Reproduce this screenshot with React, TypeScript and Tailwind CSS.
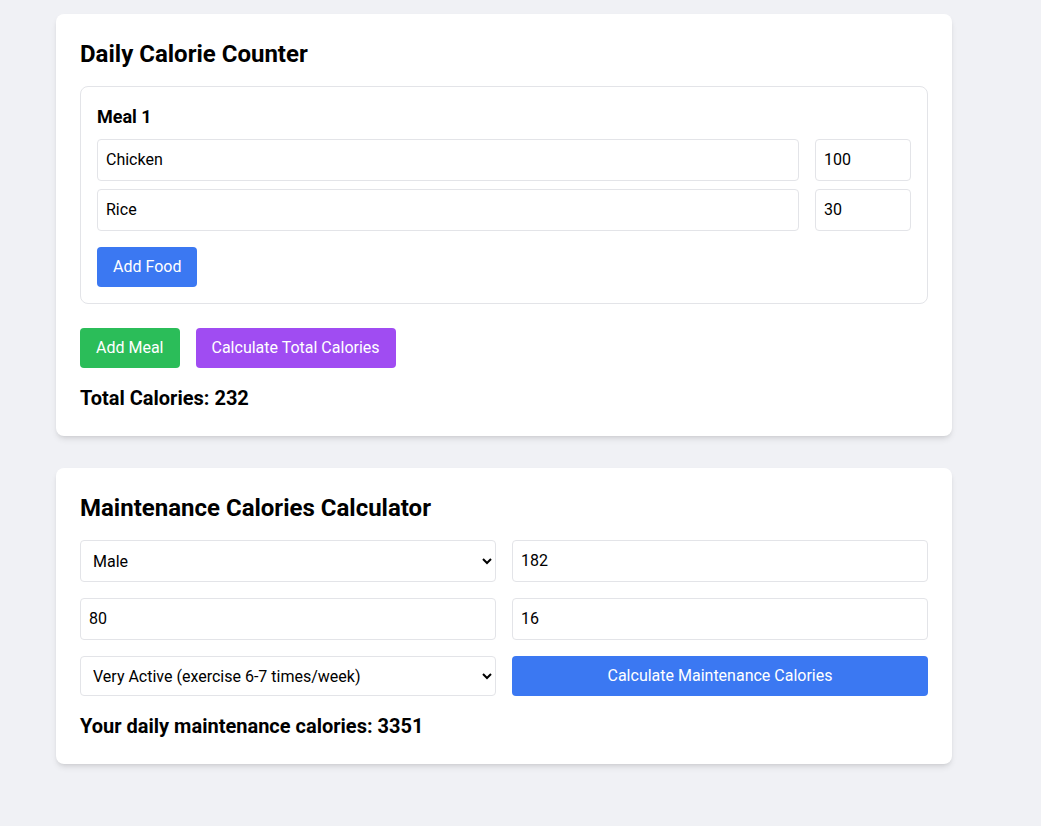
import React, { useState } from 'react';

interface Food {
  name: string;
  calories: string;
}

interface Meal {
  foods: Food[];
}

export default function App() {
  const [meals, setMeals] = useState<Meal[]>([
    { foods: [{ name: 'Chicken', calories: '100' }, { name: 'Rice', calories: '30' }] },
  ]);
  const [total] = useState(232);

  const [gender, setGender] = useState('male');
  const [height, setHeight] = useState('182');
  const [weight, setWeight] = useState('80');
  const [age, setAge] = useState('16');
  const [activity, setActivity] = useState('very');
  const [maintenance] = useState(3351);

  const updateFood = (mi: number, fi: number, key: keyof Food, value: string) => {
    setMeals(meals.map((m, i) =>
      i !== mi ? m : { foods: m.foods.map((f, j) => (j !== fi ? f : { ...f, [key]: value })) }
    ));
  };

  const addFood = (mi: number) => {
    setMeals(meals.map((m, i) => (i !== mi ? m : { foods: [...m.foods, { name: '', calories: '' }] })));
  };

  const inputCls = 'border border-[#e3e4e8] rounded p-2 text-base outline-none';

  return (
    <div className="min-h-screen bg-[#f0f1f5] pt-[14px] pl-14 pb-10 font-['Roboto',sans-serif] text-black">
      <div className="w-[896px] bg-white rounded-lg shadow-md p-6 mb-8">
        <h1 className="text-2xl font-bold mb-4">Daily Calorie Counter</h1>
        {meals.map((meal, mi) => (
          <div key={mi} className="border border-[#e3e4e8] rounded-lg p-4 mb-6">
            <h2 className="text-lg font-bold mb-2">Meal {mi + 1}</h2>
            {meal.foods.map((food, fi) => (
              <div key={fi} className="flex gap-4 mb-2">
                <input
                  className={`${inputCls} flex-1`}
                  value={food.name}
                  onChange={(e) => updateFood(mi, fi, 'name', e.target.value)}
                />
                <input
                  className={`${inputCls} w-24`}
                  value={food.calories}
                  onChange={(e) => updateFood(mi, fi, 'calories', e.target.value)}
                />
              </div>
            ))}
            <button
              onClick={() => addFood(mi)}
              className="mt-2 bg-[#3b78f2] text-white px-4 py-2 rounded"
            >
              Add Food
            </button>
          </div>
        ))}
        <div className="flex gap-4">
          <button
            onClick={() => setMeals([...meals, { foods: [] }])}
            className="bg-[#2bbd59] text-white px-4 py-2 rounded"
          >
            Add Meal
          </button>
          <button className="bg-[#a04cf2] text-white px-4 py-2 rounded">Calculate Total Calories</button>
        </div>
        <p className="mt-4 text-xl font-bold">Total Calories: {total}</p>
      </div>

      <div className="w-[896px] bg-white rounded-lg shadow-md p-6">
        <h1 className="text-2xl font-bold mb-4">Maintenance Calories Calculator</h1>
        <div className="grid grid-cols-2 gap-4">
          <select className={`${inputCls} bg-white`} value={gender} onChange={(e) => setGender(e.target.value)}>
            <option value="male">Male</option>
            <option value="female">Female</option>
          </select>
          <input className={inputCls} value={height} onChange={(e) => setHeight(e.target.value)} />
          <input className={inputCls} value={weight} onChange={(e) => setWeight(e.target.value)} />
          <input className={inputCls} value={age} onChange={(e) => setAge(e.target.value)} />
          <select className={`${inputCls} bg-white`} value={activity} onChange={(e) => setActivity(e.target.value)}>
            <option value="sedentary">Sedentary (little or no exercise)</option>
            <option value="light">Lightly Active (exercise 1-3 times/week)</option>
            <option value="moderate">Moderately Active (exercise 3-5 times/week)</option>
            <option value="very">Very Active (exercise 6-7 times/week)</option>
          </select>
          <button className="bg-[#3b78f2] text-white px-4 py-2 rounded">Calculate Maintenance Calories</button>
        </div>
        <p className="mt-4 text-xl font-bold">Your daily maintenance calories: {maintenance}</p>
      </div>
    </div>
  );
}
